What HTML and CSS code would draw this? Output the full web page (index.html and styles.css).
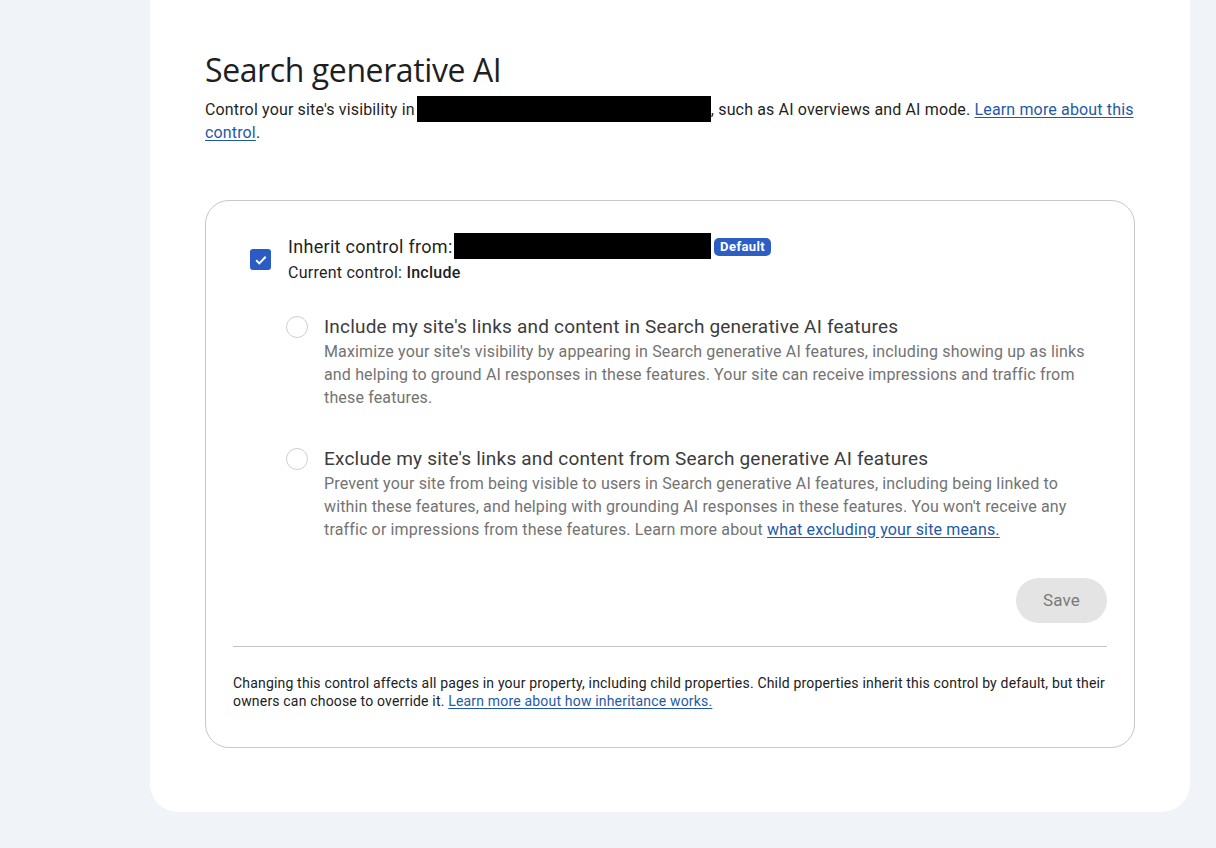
FILE: index.html
```html
<!DOCTYPE html>
<html lang="en">
<head>
<meta charset="utf-8">
<title>Search generative AI</title>
<link rel="stylesheet" href="styles.css">
</head>
<body>
<div class="page">
  <main class="panel">
    <h1 class="title">Search generative AI</h1>
    <p class="intro">Control your site's visibility in <span class="redact redact-intro"></span>, such as AI overviews and AI mode. <a href="#" class="link">Learn more about this control</a>.</p>

    <section class="card">
      <div class="inherit">
        <span class="checkbox" aria-hidden="true">
          <svg viewBox="0 0 20 20" width="20" height="20"><path d="M5.2 10.3l3.1 3.1 6.4-6.6" fill="none" stroke="#fff" stroke-width="2"/></svg>
        </span>
        <div class="inherit-text">
          <div class="inherit-line">Inherit control from: <span class="redact redact-source"></span> <span class="badge">Default</span></div>
          <div class="current">Current control: <strong>Include</strong></div>
        </div>
      </div>

      <div class="options">
        <div class="option">
          <span class="radio"></span>
          <div class="option-body">
            <div class="option-title">Include my site's links and content in Search generative AI features</div>
            <p class="option-desc">Maximize your site's visibility by appearing in Search generative AI features, including showing up as links and helping to ground AI responses in these features. Your site can receive impressions and traffic from these features.</p>
          </div>
        </div>
        <div class="option">
          <span class="radio"></span>
          <div class="option-body">
            <div class="option-title">Exclude my site's links and content from Search generative AI features</div>
            <p class="option-desc">Prevent your site from being visible to users in Search generative AI features, including being linked to within these features, and helping with grounding AI responses in these features. You won't receive any traffic or impressions from these features. Learn more about <a href="#" class="link">what excluding your site means.</a></p>
          </div>
        </div>
      </div>

      <div class="actions">
        <button class="save" type="button" disabled>Save</button>
      </div>

      <hr class="divider">

      <p class="footnote">Changing this control affects all pages in your property, including child properties. Child properties inherit this control by default, but their owners can choose to override it. <a href="#" class="link">Learn more about how inheritance works.</a></p>
    </section>
  </main>
</div>
</body>
</html>
```

FILE: styles.css
```css
* { box-sizing: border-box; }

html, body {
  margin: 0;
  height: 100%;
}

body {
  background: #f0f3f8;
  font-family: Roboto, "Liberation Sans", Arial, sans-serif;
  color: #1f1f1f;
  overflow: hidden;
}

.page {
  padding-left: 150px;
}

.panel {
  width: 1040px;
  margin-top: -40px;
  background: #ffffff;
  border-radius: 28px;
  padding: 90px 55px 64px 55px;
}

.title {
  margin: 0;
  font-family: "Open Sans", Roboto, sans-serif;
  font-weight: 400;
  font-size: 32px;
  line-height: 40px;
  color: #1f1f1f;
  letter-spacing: -0.4px;
}

.intro {
  margin: 9px 0 0 0;
  font-size: 16px;
  line-height: 22px;
  letter-spacing: 0.15px;
  width: 935px;
  color: #1f1f1f;
}

.link {
  color: #1f5aa8;
  text-decoration: underline;
  text-underline-offset: 2px;
}

.redact {
  display: inline-block;
  background: #000;
  vertical-align: middle;
}

.redact-intro {
  width: 294px;
  height: 26px;
  margin: -4px 0 0 -2px;
}

.redact-source {
  width: 257px;
  height: 26px;
  margin: -4px 0 0 -3px;
}

.card {
  margin-top: 56px;
  width: 930px;
  border: 1px solid #c7c7c7;
  border-radius: 24px;
  padding: 33px 27px 37px 27px;
}

.inherit {
  display: flex;
  align-items: center;
  gap: 17px;
  padding-left: 17px;
}

.checkbox {
  width: 21px;
  height: 21px;
  border-radius: 3px;
  background: #2b5cc6;
  display: flex;
  align-items: center;
  justify-content: center;
  flex: none;
  margin-top: 2px;
}

.inherit-line {
  font-size: 18px;
  line-height: 26px;
  letter-spacing: 0.3px;
  color: #1f1f1f;
}

.badge {
  display: inline-block;
  background: #2c5ec4;
  color: #fff;
  font-size: 13px;
  font-weight: 700;
  line-height: 18px;
  letter-spacing: 0.4px;
  padding: 0 6px;
  border-radius: 5px;
  vertical-align: 2px;
  margin-left: -2px;
}

.current {
  margin-top: 2px;
  font-size: 16px;
  line-height: 22px;
  letter-spacing: 0.25px;
  color: #1f1f1f;
}

.current strong {
  font-weight: 500;
}

.options {
  margin-top: 31px;
  padding-left: 53px;
  display: flex;
  flex-direction: column;
  gap: 38px;
}

.option {
  display: flex;
  gap: 16px;
}

.radio {
  width: 22px;
  height: 22px;
  border: 1.5px solid #cfcfcf;
  border-radius: 50%;
  flex: none;
  margin-top: 1px;
}

.option-title {
  font-size: 19px;
  line-height: 24px;
  letter-spacing: 0.2px;
  color: #3c3c3c;
}

.option-desc {
  margin: 1px 0 0 0;
  font-size: 16px;
  line-height: 23px;
  letter-spacing: 0.15px;
  color: #737373;
  max-width: 770px;
}

.actions {
  display: flex;
  justify-content: flex-end;
  margin-top: 37px;
}

.save {
  width: 91px;
  height: 45px;
  border: none;
  border-radius: 23px;
  background: #e4e4e4;
  color: #7a7a7a;
  font-family: Roboto, sans-serif;
  font-size: 17px;
  letter-spacing: 0.2px;
  padding: 0;
}

.divider {
  margin: 23px 0 0 0;
  border: none;
  border-top: 1px solid #c4c4c4;
}

.footnote {
  margin: 27px 0 0 0;
  font-size: 14px;
  line-height: 18px;
  letter-spacing: 0.18px;
  color: #202124;
}
```
